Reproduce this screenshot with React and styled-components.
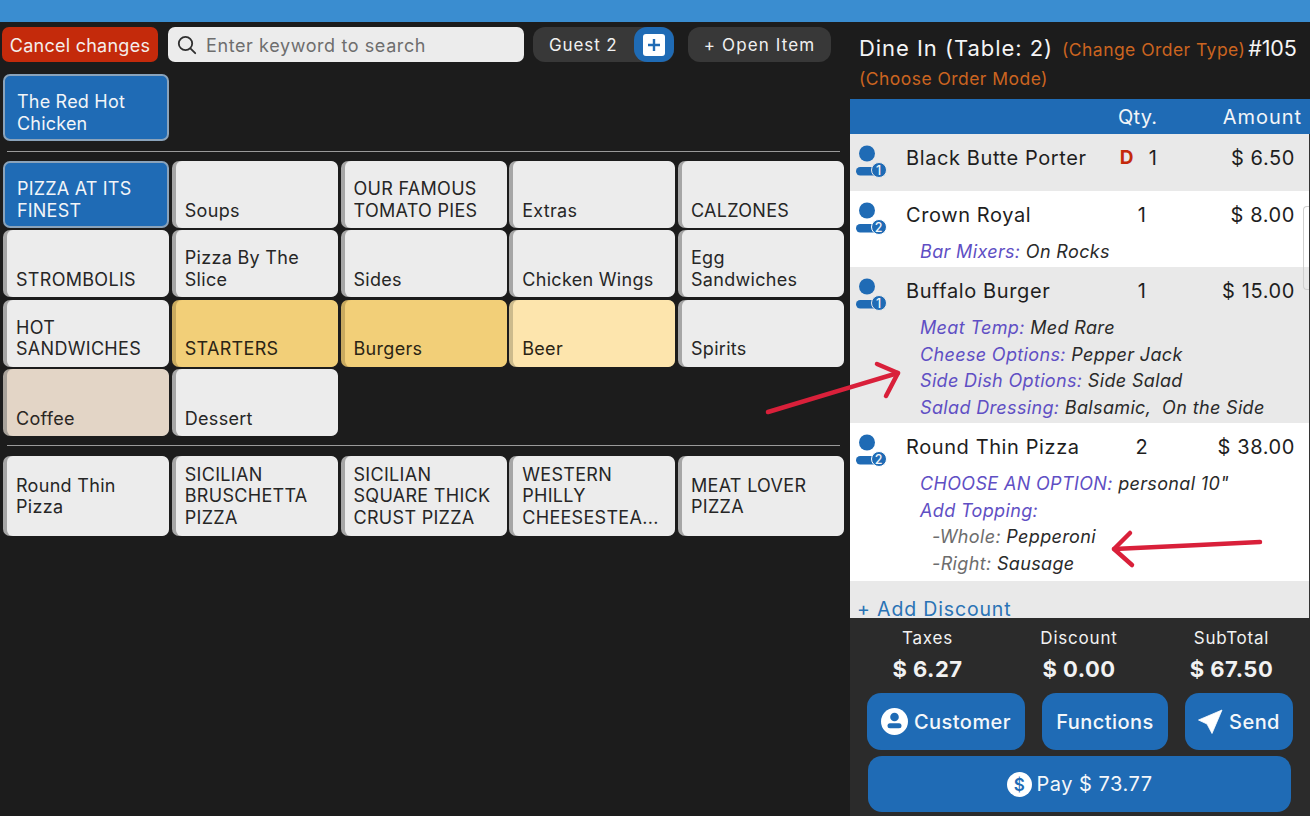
import React from 'react'
import styled, { createGlobalStyle } from 'styled-components'

const Global = createGlobalStyle`
  html, body { margin: 0; padding: 0; background: #1c1c1c; }
  body { font-family: Inter, "Open Sans", sans-serif; width: 1310px; height: 816px; overflow: hidden; }
  * { box-sizing: border-box; }
`

const Page = styled.div`
  position: relative;
  width: 1310px;
  height: 816px;
  overflow: hidden;
`

const TopBar = styled.div`
  height: 22px;
  background: #3a8dd0;
`

const Columns = styled.div`
  display: flex;
  height: 794px;
`

const Left = styled.div`
  width: 850px;
  background: #1c1c1c;
  padding: 5px 6px 0 3px;
`

const Toolbar = styled.div`
  display: flex;
  align-items: stretch;
  height: 35px;
  margin-left: -1px;
`

const CancelButton = styled.div`
  width: 156px;
  border-radius: 7px;
  background: #c42a0b;
  color: #f4eeec;
  font-size: 18px;
  letter-spacing: 0.25px;
  display: flex;
  align-items: center;
  justify-content: center;
  padding-top: 2px;
  margin-right: 10px;
`

const Search = styled.div`
  width: 356px;
  border-radius: 7px;
  background: #ececec;
  color: #6e6e6e;
  font-size: 18px;
  letter-spacing: 0.6px;
  display: flex;
  align-items: center;
  gap: 9px;
  padding: 1px 0 0 9px;
  margin-right: 9px;
`

const GuestPill = styled.div`
  width: 141px;
  border-radius: 12px;
  background: #383838;
  color: #f0f0f0;
  font-size: 17px;
  letter-spacing: 0.9px;
  display: flex;
  align-items: center;
  justify-content: space-between;
  padding-left: 16px;
  margin-right: 14px;
`

const GuestAdd = styled.div`
  width: 40px;
  height: 35px;
  border-radius: 13px;
  background: #1f6bb5;
  display: flex;
  align-items: center;
  justify-content: center;
`

const GuestAddInner = styled.div`
  width: 22px;
  height: 22px;
  border-radius: 3px;
  background: #fff;
  display: flex;
  align-items: center;
  justify-content: center;
`

const OpenItem = styled.div`
  width: 143px;
  border-radius: 12px;
  background: #383838;
  color: #f0f0f0;
  font-size: 17px;
  letter-spacing: 1.1px;
  display: flex;
  align-items: center;
  justify-content: center;
`

const TileGrid = styled.div`
  display: grid;
  grid-template-columns: repeat(5, 166px);
  grid-auto-rows: ${p => p.$row}px;
  gap: 2.4px 2.75px;
`

const Divider = styled.div`
  height: 1px;
  width: 833px;
  background: #9a9a9a;
  margin: ${p => p.$m};
`

const tileColors = {
  plain: ['#ececec', '#a6a6a6', '#262626'],
  amber: ['#f2cf78', '#c9aa5f', '#2a2415'],
  cream: ['#fde5ad', '#cdbb8c', '#2a2415'],
  tan: ['#e3d5c6', '#a8a29a', '#2a2623'],
}

const Tile = styled.div`
  border-radius: 7px;
  background: ${p => tileColors[p.$tone || 'plain'][1]};
  padding-left: 4px;
  display: flex;
  overflow: hidden;
`

const TileFace = styled.div`
  flex: 1;
  min-width: 0;
  border-radius: 6px;
  background: ${p => tileColors[p.$tone || 'plain'][0]};
  color: ${p => tileColors[p.$tone || 'plain'][2]};
  font-size: 18px;
  line-height: 21.5px;
  letter-spacing: 0.3px;
  padding: ${p => (p.$center ? '0 4px 0 9px' : '0 4px 7px 9px')};
  display: flex;
  align-items: ${p => (p.$center ? 'center' : 'flex-end')};
`

const ActiveTile = styled.div`
  border-radius: 7px;
  background: #1f6bb5;
  border: 2px solid #8aa3bb;
  color: #f2f5f8;
  font-size: 18px;
  line-height: 21.5px;
  letter-spacing: 0.2px;
  padding: 0 6px 5px 12px;
  display: flex;
  align-items: flex-end;
`

const VendorRow = styled.div`
  display: flex;
  height: 67px;
  margin-top: 12px;
`

const VendorTile = styled(ActiveTile)`
  width: 166px;
`

const Right = styled.div`
  width: 460px;
  display: flex;
  flex-direction: column;
  background: #e9e9e9;
`

const OrderHead = styled.div`
  height: 77px;
  background: #1c1c1c;
  padding: 13px 0 0 9px;
`

const OrderLine = styled.div`
  display: flex;
  align-items: baseline;
  height: 30px;
  margin-top: ${p => p.$mt || 0}px;
`

const OrderTitle = styled.span`
  color: #f5f5f5;
  font-size: 22px;
  letter-spacing: 0.95px;
  width: 203px;
`

const OrderLink = styled.span`
  color: #cb6420;
  font-size: 17.5px;
  letter-spacing: 0.45px;
`

const OrderNumber = styled.span`
  color: #f5f5f5;
  font-size: 21.5px;
  letter-spacing: -0.2px;
  margin-left: 3px;
`

const TableHead = styled.div`
  height: 35px;
  background: #1f6bb5;
  color: #f2f5f8;
  font-size: 20px;
  letter-spacing: 0.2px;
  display: flex;
  align-items: center;
`

const QtyLabel = styled.span`
  margin-left: 268px;
`

const AmountLabel = styled.span`
  margin-left: auto;
  margin-right: 8px;
  letter-spacing: 0.95px;
`

const Rows = styled.div`
  flex: 1;
  min-height: 0;
  display: flex;
  flex-direction: column;
  border-right: 1px solid #333;
`

const OrderRow = styled.div`
  background: ${p => (p.$alt ? '#fff' : '#e9e9e9')};
  height: ${p => p.$h}px;
  flex: none;
  padding-top: 9px;
`

const ItemLine = styled.div`
  display: flex;
  align-items: flex-start;
  height: 39px;
  color: #1e1e1e;
  font-size: 20px;
  letter-spacing: 0.6px;
`

const Seat = styled.div`
  width: 56px;
  padding: 2px 0 0 6px;
  flex: none;
`

const ItemName = styled.div`
  width: 204px;
  flex: none;
  line-height: 30px;
`

const Disc = styled.div`
  width: 34px;
  flex: none;
  color: #c42a0b;
  font-weight: 700;
  line-height: 30px;
  text-align: center;
  font-size: 19px;
`

const Qty = styled.div`
  width: 24px;
  flex: none;
  line-height: 30px;
  text-align: center;
  margin-left: ${p => p.$shift}px;
`

const Price = styled.div`
  flex: 1;
  text-align: right;
  padding-right: 14px;
  line-height: 30px;
  margin-left: ${p => -p.$shift}px;
`

const Modifier = styled.div`
  padding-left: ${p => (p.$sub ? 82 : 70)}px;
  font-size: 18px;
  line-height: 26.6px;
  font-style: italic;
  color: #2a2a2a;
  letter-spacing: 0.35px;
  white-space: pre;
`

const ModLabel = styled.span`
  color: ${p => (p.$sub ? '#6d6d6d' : '#5f4fc4')};
`

const AddDiscount = styled.div`
  color: #2a73b5;
  font-size: 19.5px;
  letter-spacing: 0.85px;
  padding: 19px 0 0 7px;
  line-height: 18px;
`

const Footer = styled.div`
  height: 198px;
  flex: none;
  background: #2b2b2b;
  padding: 9px 17px 0 17px;
`

const Totals = styled.div`
  display: grid;
  grid-template-columns: 121px 182px 1fr;
  color: #f2f2f2;
  text-align: center;
  margin-bottom: 10px;
`

const TotalLabel = styled.div`
  font-size: 17px;
  line-height: 22px;
  letter-spacing: 0.8px;
`

const TotalValue = styled.div`
  font-size: 22px;
  font-weight: 700;
  line-height: 28px;
  letter-spacing: 0.5px;
  margin-top: 6px;
`

const ActionRow = styled.div`
  display: flex;
  justify-content: space-between;
  margin-bottom: 6px;
`

const Action = styled.div`
  width: ${p => p.$w}px;
  height: 57px;
  border-radius: 14px;
  background: #1f6bb5;
  color: #f4f7fa;
  font-size: 20px;
  font-weight: 500;
  letter-spacing: 0.45px;
  display: flex;
  align-items: center;
  justify-content: center;
  gap: 6px;
`

const PayButton = styled(Action)`
  width: 423px;
  height: 56px;
  margin-left: 1px;
  font-weight: 400;
  letter-spacing: 0.5px;
  gap: 5px;
`

const Annotation = styled.svg`
  position: absolute;
  inset: 0;
  width: 1310px;
  height: 816px;
  pointer-events: none;
`

const ScrollMark = styled.div`
  position: absolute;
  right: 1px;
  top: 206px;
  width: 6px;
  height: 84px;
  border: 1px solid #cfcfcf;
  border-right: 0;
  border-radius: 4px 0 0 4px;
`

const SeatIcon = ({ n }) => (
  <svg width="32" height="33" viewBox="0 0 32 33">
    <circle cx="11" cy="8.5" r="8" fill="#1f6bb5" />
    <rect x="0" y="22" width="22" height="8.5" rx="4.2" fill="#1f6bb5" />
    <circle cx="23" cy="25" r="7.5" fill="#1f6bb5" stroke={n === 1 ? '#e9e9e9' : '#fff'} strokeWidth="1" />
    <text x="23" y="29.5" textAnchor="middle" fontSize="12.5" fontWeight="500" fontFamily="Inter, sans-serif" fill="#f2f5f8">{n}</text>
  </svg>
)

const SearchIcon = () => (
  <svg width="20" height="20" viewBox="0 0 20 20" fill="none" stroke="#2f2f2f" strokeWidth="1.8">
    <circle cx="8.5" cy="8.5" r="6.7" />
    <path d="M13.6 13.6 L18.2 18.2" strokeLinecap="round" />
  </svg>
)

const PlusIcon = () => (
  <svg width="14" height="14" viewBox="0 0 14 14" stroke="#1f6bb5" strokeWidth="2.4">
    <path d="M7 1 V13 M1 7 H13" />
  </svg>
)

const CustomerIcon = () => (
  <svg width="27" height="27" viewBox="0 0 27 27">
    <circle cx="13.5" cy="13.5" r="13.5" fill="#fff" />
    <circle cx="13.5" cy="9" r="4.3" fill="#1f6bb5" />
    <rect x="6.5" y="15.2" width="14" height="5" rx="2.5" fill="#1f6bb5" />
  </svg>
)

const SendIcon = () => (
  <svg width="25" height="25" viewBox="0 0 25 25">
    <path d="M24 1 L0.5 11 L9 15 L14 24.5 Z" fill="#fff" stroke="#fff" strokeWidth="0.8" strokeLinejoin="round" />
  </svg>
)

const DollarIcon = () => (
  <svg width="25" height="25" viewBox="0 0 25 25">
    <circle cx="12.5" cy="12.5" r="12.5" fill="#fff" />
    <text x="12.5" y="18.5" textAnchor="middle" fontSize="17" fontWeight="600" fontFamily="Inter, sans-serif" fill="#1f6bb5">$</text>
  </svg>
)

const categories = [
  { label: 'Soups' },
  { label: 'OUR FAMOUS\nTOMATO PIES' },
  { label: 'Extras' },
  { label: 'CALZONES' },
  { label: 'STROMBOLIS' },
  { label: 'Pizza By The\nSlice' },
  { label: 'Sides' },
  { label: 'Chicken Wings' },
  { label: 'Egg\nSandwiches' },
  { label: 'HOT\nSANDWICHES' },
  { label: 'STARTERS', tone: 'amber' },
  { label: 'Burgers', tone: 'amber' },
  { label: 'Beer', tone: 'cream' },
  { label: 'Spirits' },
  { label: 'Coffee', tone: 'tan' },
  { label: 'Dessert' },
]

const pizzas = [
  'Round Thin\nPizza',
  'SICILIAN\nBRUSCHETTA\nPIZZA',
  'SICILIAN\nSQUARE THICK\nCRUST PIZZA',
  'WESTERN\nPHILLY\nCHEESESTEA...',
  'MEAT LOVER\nPIZZA',
]

const Lines = ({ text }) => <span>{text.split('\n').map((t, i) => <div key={i}>{t}</div>)}</span>

const Mod = ({ label, value, sub }) => (
  <Modifier $sub={sub}>
    <ModLabel $sub={sub}>{label}</ModLabel> {value}
  </Modifier>
)

const Item = ({ seat, name, disc, qty, price }) => (
  <ItemLine>
    <Seat><SeatIcon n={seat} /></Seat>
    <ItemName>{name}</ItemName>
    <Disc>{disc}</Disc>
    <Qty $shift={disc ? -3 : -14}>{qty}</Qty>
    <Price $shift={disc ? -3 : -14}>{price}</Price>
  </ItemLine>
)

export default function App() {
  return (
    <Page>
      <Global />
      <TopBar />
      <Columns>
        <Left>
          <Toolbar>
            <CancelButton>Cancel changes</CancelButton>
            <Search><SearchIcon />Enter keyword to search</Search>
            <GuestPill>
              Guest 2
              <GuestAdd><GuestAddInner><PlusIcon /></GuestAddInner></GuestAdd>
            </GuestPill>
            <OpenItem>+ Open Item</OpenItem>
          </Toolbar>
          <VendorRow>
            <VendorTile><Lines text={'The Red Hot\nChicken'} /></VendorTile>
          </VendorRow>
          <Divider $m="10px 0 9px 4px" />
          <TileGrid $row={67}>
            <ActiveTile><Lines text={'PIZZA AT ITS\nFINEST'} /></ActiveTile>
            {categories.map(c => (
              <Tile key={c.label} $tone={c.tone}>
                <TileFace $tone={c.tone}><Lines text={c.label} /></TileFace>
              </Tile>
            ))}
          </TileGrid>
          <Divider $m="9px 0 10px 4px" />
          <TileGrid $row={80}>
            {pizzas.map(p => (
              <Tile key={p}>
                <TileFace $center><Lines text={p} /></TileFace>
              </Tile>
            ))}
          </TileGrid>
        </Left>
        <Right>
          <OrderHead>
            <OrderLine>
              <OrderTitle>Dine In (Table: 2)</OrderTitle>
              <OrderLink>(Change Order Type)</OrderLink>
              <OrderNumber>#105</OrderNumber>
            </OrderLine>
            <OrderLine $mt={3}><OrderLink>(Choose Order Mode)</OrderLink></OrderLine>
          </OrderHead>
          <TableHead>
            <QtyLabel>Qty.</QtyLabel>
            <AmountLabel>Amount</AmountLabel>
          </TableHead>
          <Rows>
            <OrderRow $h={57}>
              <Item seat={1} name="Black Butte Porter" disc="D" qty="1" price="$ 6.50" />
            </OrderRow>
            <OrderRow $alt $h={76}>
              <Item seat={2} name="Crown Royal" qty="1" price="$ 8.00" />
              <Mod label="Bar Mixers:" value="On Rocks" />
            </OrderRow>
            <OrderRow $h={156}>
              <Item seat={1} name="Buffalo Burger" qty="1" price="$ 15.00" />
              <Mod label="Meat Temp:" value="Med Rare" />
              <Mod label="Cheese Options:" value="Pepper Jack" />
              <Mod label="Side Dish Options:" value="Side Salad" />
              <Mod label="Salad Dressing:" value="Balsamic,  On the Side" />
            </OrderRow>
            <OrderRow $alt $h={158}>
              <Item seat={2} name="Round Thin Pizza" qty="2" price="$ 38.00" />
              <Mod label="CHOOSE AN OPTION:" value={'personal 10"'} />
              <Mod label="Add Topping:" value="" />
              <Mod sub label="-Whole:" value="Pepperoni" />
              <Mod sub label="-Right:" value="Sausage" />
            </OrderRow>
            <AddDiscount>+ Add Discount</AddDiscount>
          </Rows>
          <Footer>
            <Totals>
              <div><TotalLabel>Taxes</TotalLabel><TotalValue>$ 6.27</TotalValue></div>
              <div><TotalLabel>Discount</TotalLabel><TotalValue>$ 0.00</TotalValue></div>
              <div><TotalLabel>SubTotal</TotalLabel><TotalValue>$ 67.50</TotalValue></div>
            </Totals>
            <ActionRow>
              <Action $w={158}><CustomerIcon />Customer</Action>
              <Action $w={126}>Functions</Action>
              <Action $w={108}><SendIcon />Send</Action>
            </ActionRow>
            <PayButton><DollarIcon />Pay $ 73.77</PayButton>
          </Footer>
        </Right>
      </Columns>
      <ScrollMark />
      <Annotation viewBox="0 0 1310 816">
        <g fill="none" stroke="#d9203a" strokeWidth="4.5" strokeLinecap="round" strokeLinejoin="round">
          <path d="M768 412 C 810 399, 855 386, 898 373" />
          <path d="M877 364 L 898 373 L 886 396" />
          <path d="M1260 542 C 1210 544, 1165 547, 1114 549" />
          <path d="M1130 533 L 1114 549 L 1132 565" />
        </g>
      </Annotation>
    </Page>
  )
}
